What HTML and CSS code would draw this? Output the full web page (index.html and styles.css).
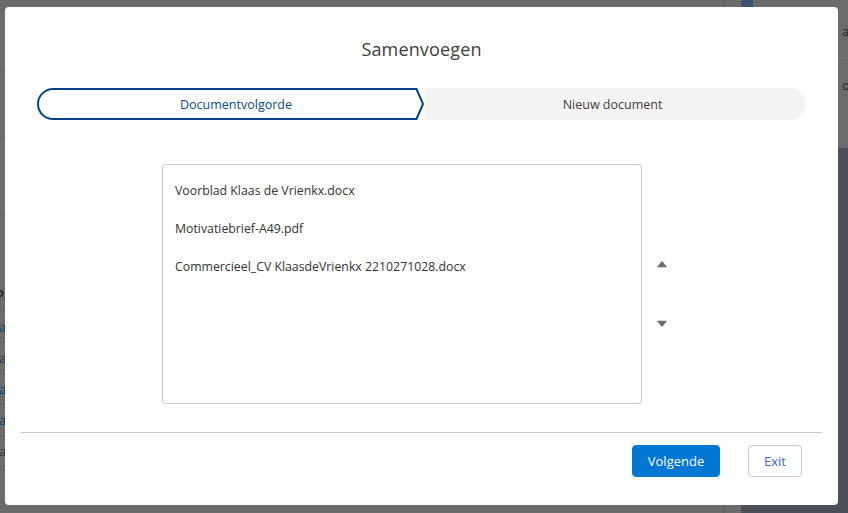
FILE: index.html
```html
<!DOCTYPE html>
<html lang="nl">
<head>
<meta charset="utf-8">
<title>Samenvoegen</title>
<link rel="stylesheet" href="styles.css">
</head>
<body>
<div class="page">
  <div class="page-main">
    <div class="band band-tall"></div>
    <div class="band band-short"></div>
    <div class="band band-tall"></div>
    <div class="band band-short"></div>
    <div class="band band-tall"></div>
    <div class="band band-short"></div>
    <div class="table-head"><span class="bold-cut">o,</span></div>
    <div class="rows">
      <div class="row"><span class="cut">a</span></div>
      <div class="row"><span class="cut dark">a</span></div>
      <div class="row"><span class="cut">a</span></div>
      <div class="row"><span class="cut">a</span></div>
      <div class="row"><span class="cut dark">a</span></div>
    </div>
  </div>
  <div class="page-gap"></div>
  <div class="page-side">
    <div class="side-bar"></div>
    <div class="side-body">
      <div class="side-top">
        <div class="side-line">a</div>
        <div class="side-line">oc</div>
      </div>
      <div class="side-dark"></div>
    </div>
  </div>
</div>

<div class="modal" role="dialog" aria-label="Samenvoegen">
  <h2 class="modal-title">Samenvoegen</h2>
  <div class="path">
    <div class="step step-active">
      <svg class="step-shape" width="388" height="32" viewBox="0 0 388 32" aria-hidden="true">
        <path d="M16 1 H379.5 L386 16 L379.5 31 H16 A15 15 0 0 1 16 1 Z" fill="#fff" stroke="#014486" stroke-width="2"/>
      </svg>
      <span class="step-label">Documentvolgorde</span>
    </div>
    <div class="step step-next"><span class="step-label">Nieuw document</span></div>
  </div>
  <div class="body">
    <ul class="doc-list">
      <li>Voorblad Klaas de Vrienkx.docx</li>
      <li>Motivatiebrief-A49.pdf</li>
      <li>Commercieel_CV KlaasdeVrienkx 2210271028.docx</li>
    </ul>
    <div class="movers">
      <button class="mover" aria-label="Omhoog"><svg width="10" height="7" viewBox="0 0 10 7"><path d="M5 0 L10 6 H0 Z" fill="#706e6b"/><rect x="0" y="6" width="10" height="1" fill="#d8d8d8"/></svg></button>
      <button class="mover" aria-label="Omlaag"><svg width="10" height="7" viewBox="0 0 10 7"><rect x="0" y="0" width="10" height="1" fill="#d8d8d8"/><path d="M0 1 H10 L5 7 Z" fill="#706e6b"/></svg></button>
    </div>
  </div>
  <div class="footer">
    <button class="btn btn-brand">Volgende</button>
    <button class="btn btn-neutral">Exit</button>
  </div>
</div>
</body>
</html>
```
FILE: styles.css
```css
* { box-sizing: border-box; }
html, body { margin: 0; padding: 0; }
body {
  width: 848px;
  height: 513px;
  overflow: hidden;
  background: #6b6b6b;
  font-family: "Open Sans", "Noto Sans", "Liberation Sans", sans-serif;
  color: #3e3e3c;
}

/* dimmed background page */
.page { display: flex; height: 513px; }
.page-main {
  flex: 0 0 724px;
  border-right: 1px solid #5d5d5d;
  display: flex;
  flex-direction: column;
}
.band { border-bottom: 1px solid #767676; }
.band-tall { height: 53px; }
.band-short { height: 13px; }
.band-short + .band-tall { height: 65px; }
.table-head {
  height: 90px;
  display: flex;
  align-items: flex-end;
  padding-bottom: 11px;
  border-bottom: 1px solid #5f5f5f;
}
.bold-cut { font-weight: 700; font-size: 13px; line-height: 16px; color: #2a2a2a; margin-left: -4px; }
.rows { display: flex; flex-direction: column; }
.row { height: 31px; border-bottom: 1px solid #5f5f5f; display: flex; align-items: center; }
.cut { font-size: 13px; color: #0b3e70; margin-left: -1px; }
.cut.dark { color: #2c3a48; }
.page-gap { flex: 0 0 17px; }
.page-side { flex: 1 1 auto; min-width: 0; overflow: hidden; display: flex; }
.side-bar { flex: 0 0 12px; background: #3b5170; }
.side-body { flex: 1; min-width: 0; display: flex; flex-direction: column; }
.side-top { height: 148px; padding-top: 22px; padding-left: 89px; font-size: 13px; color: #222; white-space: nowrap; }
.side-line { height: 36px; border-bottom: 1px solid #7a7a7a; margin-left: -89px; padding-left: 89px; }
.side-line + .side-line { padding-top: 18px; height: 44px; border-bottom: 0; }
.side-dark { flex: 1; background: #4b4f59; margin-left: -12px; }

/* modal */
.modal {
  position: fixed;
  left: 5px;
  top: 7px;
  width: 833px;
  height: 498px;
  background: #fff;
  border-radius: 4px;
  display: flex;
  flex-direction: column;
}
.modal-title {
  margin: 30px 0 0;
  text-align: center;
  font-size: 18px;
  line-height: 24px;
  font-weight: 400;
  color: #3e3e3c;
  letter-spacing: 0.15px;
}
.path {
  margin: 27px 32px 0 32px;
  height: 32px;
  display: flex;
  background: #f3f3f3;
  border-radius: 16px;
}
.step { display: flex; align-items: center; justify-content: center; font-size: 12.5px; }
.step-active { flex: 0 0 388px; position: relative; background: #fff; border-radius: 16px 0 0 16px; }
.step-shape { position: absolute; left: 0; top: 0; }
.step-active .step-label { position: relative; color: #0b4a8f; padding-left: 10px; }
.step-next { flex: 1; color: #3e3e3c; padding-right: 6px; }

.body {
  display: flex;
  justify-content: center;
  margin-top: 44px;
  padding-left: 9px;
}
.doc-list {
  list-style: none;
  margin: 0;
  padding: 13px 12px;
  width: 480px;
  height: 240px;
  border: 1px solid #c9c9c9;
  border-radius: 4px;
}
.doc-list li {
  font-size: 12.3px;
  line-height: 26px;
  height: 38px;
  color: #333;
}
.movers {
  width: 48px;
  display: flex;
  flex-direction: column;
  align-items: flex-start;
  padding-left: 15px;
  padding-top: 97px;
  gap: 52px;
}
.mover {
  border: 0;
  background: none;
  padding: 0;
  width: 10px;
  height: 7px;
  display: block;
  cursor: pointer;
}
.mover svg { display: block; }

.footer {
  margin: 28px 16px 0;
  border-top: 1px solid #c9c9c9;
  padding: 12px 20px 0 0;
  display: flex;
  justify-content: flex-end;
  gap: 28px;
}
.btn {
  height: 32px;
  border-radius: 4px;
  font-family: inherit;
  font-size: 13px;
  padding: 0;
  cursor: pointer;
}
.btn-brand {
  width: 88px;
  background: #0176d3;
  border: 1px solid #0176d3;
  color: #fff;
}
.btn-neutral {
  width: 54px;
  background: #fff;
  border: 1px solid #c9c9c9;
  color: #3a63d6;
}
```
